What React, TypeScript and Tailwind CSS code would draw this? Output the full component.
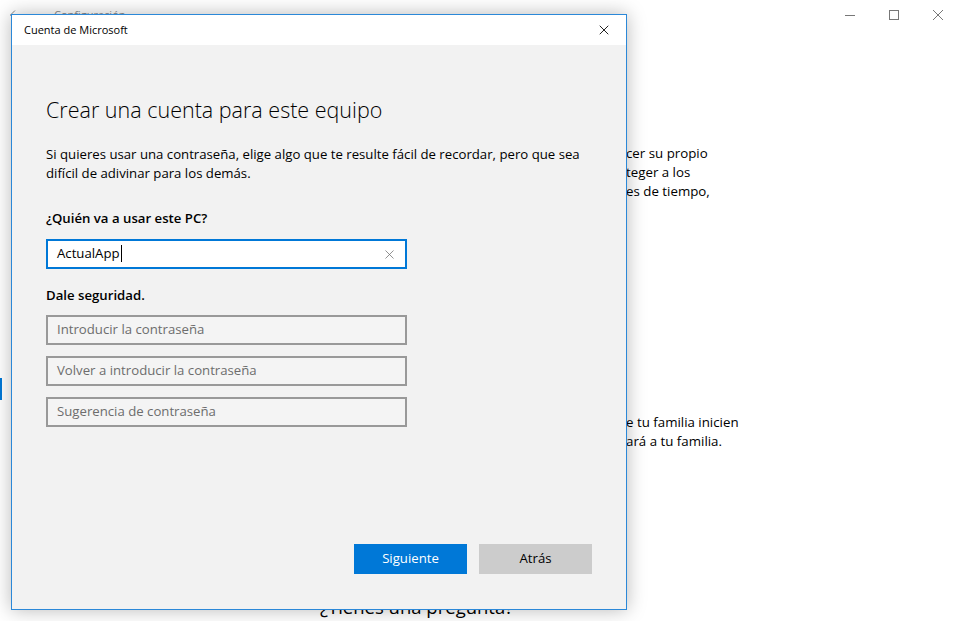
import { X } from 'lucide-react';

const font = { fontFamily: '"Open Sans", "Noto Sans", "Liberation Sans", sans-serif' };

function PwdField({ placeholder }: { placeholder: string }) {
  return (
    <div className="w-[361px] h-[30px] border-2 border-[#999999] bg-[#f4f4f4] flex items-center px-[9px]">
      <span className="text-[13.2px] text-[#6d6d6d]">{placeholder}</span>
    </div>
  );
}

function AccountDialog() {
  return (
    <div className="absolute left-[11px] top-[14px] w-[616px] h-[596px] border border-[#2b88d8] bg-[#f2f2f2] shadow-[0_0_18px_rgba(0,0,0,0.28)] flex flex-col">
      {/* title bar */}
      <div className="h-[30px] bg-white flex items-center justify-between pl-[12px] pr-[14px]">
        <span className="text-[11px] text-black">Cuenta de Microsoft</span>
        <X size={16} strokeWidth={1.3} className="text-black" />
      </div>

      <div className="flex-1 flex flex-col pl-[34px] pr-[34px]">
        <h1 className="mt-[50px] text-[21.5px] font-light text-black leading-[30px]">Crear una cuenta para este equipo</h1>
        <p className="mt-[20px] text-[13.2px] leading-[19px] text-black w-[545px]">
          Si quieres usar una contraseña, elige algo que te resulte fácil de recordar, pero que sea difícil de adivinar para los demás.
        </p>

        <div className="mt-[26px] text-[13.2px] font-semibold text-black leading-[19px]">¿Quién va a usar este PC?</div>
        <div className="mt-[11px] w-[361px] h-[30px] border-2 border-[#0078d7] bg-white flex items-center justify-between pl-[9px] pr-[8px]">
          <span className="text-[13.2px] text-black flex items-center">
            ActualApp<span className="inline-block w-px h-[17px] bg-black ml-px" />
          </span>
          <X size={15} strokeWidth={1.2} className="text-[#6e6e6e]" />
        </div>

        <div className="mt-[17px] text-[13.2px] font-semibold text-black leading-[19px]">Dale seguridad.</div>
        <div className="mt-[10px] flex flex-col gap-[11px]">
          <PwdField placeholder="Introducir la contraseña" />
          <PwdField placeholder="Volver a introducir la contraseña" />
          <PwdField placeholder="Sugerencia de contraseña" />
        </div>

        <div className="mt-auto mb-[35px] flex justify-end gap-[12px]">
          <button className="w-[113px] h-[30px] bg-[#0078d7] text-white text-[13.2px]">Siguiente</button>
          <button className="w-[113px] h-[30px] bg-[#cccccc] text-black text-[13.2px]">Atrás</button>
        </div>
      </div>
    </div>
  );
}

export default function App() {
  return (
    <div className="relative w-[957px] h-[621px] bg-white overflow-hidden" style={font}>
      {/* Settings window behind */}
      <div className="h-[30px] flex items-center justify-between pl-[9px] pr-[14px]">
        <div className="flex items-center gap-[31px]">
          <svg width="14" height="12" viewBox="0 0 14 12" fill="none" stroke="#888" strokeWidth="1">
            <path d="M13 6H1.5M6 1.5L1.5 6L6 10.5" />
          </svg>
          <span className="text-[11px] text-[#8a8a8a]">Configuración</span>
        </div>
        <div className="flex items-center gap-[34px]">
          <svg width="10" height="10" viewBox="0 0 10 10" stroke="#777" strokeWidth="1"><path d="M0 5.5H10" /></svg>
          <svg width="10" height="10" viewBox="0 0 10 10" fill="none" stroke="#777" strokeWidth="1"><rect x="0.5" y="0.5" width="9" height="9" /></svg>
          <svg width="10" height="10" viewBox="0 0 10 10" stroke="#777" strokeWidth="1"><path d="M0 0L10 10M10 0L0 10" /></svg>
        </div>
      </div>

      <div className="flex h-[565px]">
        <div className="w-[2px] mt-[348px] h-[22px] bg-[#0078d7] self-start" />
        <div className="flex-1 flex flex-col pl-[624px] text-[13.3px] leading-[19px] text-black">
          <div className="mt-[114px]">cer su propio</div>
          <div>teger a los</div>
          <div>es de tiempo,</div>
          <div className="mt-[212px]">e tu familia inicien</div>
          <div>ará a tu familia.</div>
        </div>
      </div>
      <div className="pl-[320px] -mt-[1px] text-[18.5px] text-black leading-[26px]">¿Tienes una pregunta?</div>

      <AccountDialog />
    </div>
  );
}
